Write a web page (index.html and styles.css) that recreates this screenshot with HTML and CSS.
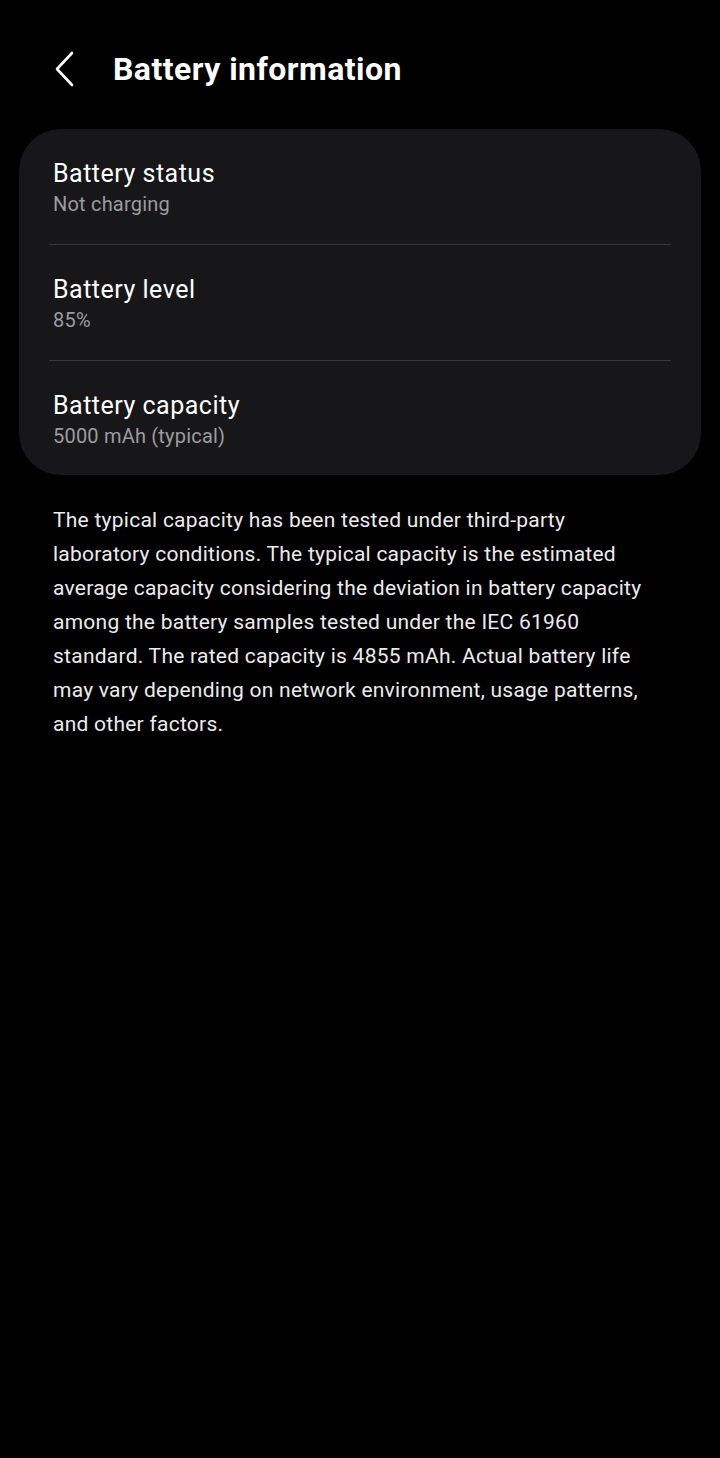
FILE: index.html
```html
<!DOCTYPE html>
<html lang="en">
<head>
<meta charset="utf-8">
<title>Battery information</title>
<link rel="stylesheet" href="styles.css">
</head>
<body>
<header class="appbar">
  <span class="back" aria-label="Back">
    <svg width="22" height="36" viewBox="0 0 22 36">
      <path d="M18 2 L3 18 L18 34" fill="none" stroke="#ffffff" stroke-width="2.6" stroke-linecap="round" stroke-linejoin="round"/>
    </svg>
  </span>
  <h1 class="title">Battery information</h1>
</header>
<section class="card">
  <div class="row">
    <div class="label">Battery status</div>
    <div class="value">Not charging</div>
  </div>
  <div class="divider"></div>
  <div class="row">
    <div class="label">Battery level</div>
    <div class="value">85%</div>
  </div>
  <div class="divider"></div>
  <div class="row row-last">
    <div class="label">Battery capacity</div>
    <div class="value">5000 mAh (typical)</div>
  </div>
</section>
<p class="note">The typical capacity has been tested under third-party laboratory conditions. The typical capacity is the estimated average capacity considering the deviation in battery capacity among the battery samples tested under the IEC 61960 standard. The rated capacity is 4855 mAh. Actual battery life may vary depending on network environment, usage patterns, and other factors.</p>
</body>
</html>
```
FILE: styles.css
```css
html, body {
  margin: 0;
  padding: 0;
  background: #000000;
}
body {
  width: 720px;
  min-height: 1458px;
  font-family: Roboto, "Noto Sans", sans-serif;
  color: #ffffff;
}
.appbar {
  display: flex;
  align-items: center;
  height: 50px;
  padding: 44px 0 0 54px;
}
.back {
  display: flex;
  width: 22px;
  height: 36px;
  margin-right: 37px;
}
.title {
  margin: 0;
  font-size: 32px;
  font-weight: 700;
  line-height: 50px;
  letter-spacing: 0.45px;
}
.card {
  margin: 35px 19px 0 19px;
  background: #17171a;
  border-radius: 42px;
  padding: 0;
}
.row {
  padding: 30px 34px 28px 34px;
}
.row-last {
  padding-bottom: 27px;
}
.label {
  font-size: 25px;
  line-height: 30px;
  letter-spacing: 0.5px;
  color: #ffffff;
}
.value {
  margin-top: 3px;
  font-size: 20px;
  line-height: 24px;
  letter-spacing: 0.2px;
  color: #9c9c9f;
}
.divider {
  height: 1px;
  margin: 0 30px;
  background: #38383b;
}
.note {
  margin: 28px 53px 0 53px;
  font-size: 21px;
  line-height: 34px;
  letter-spacing: 0.25px;
  color: #ececec;
}
```
